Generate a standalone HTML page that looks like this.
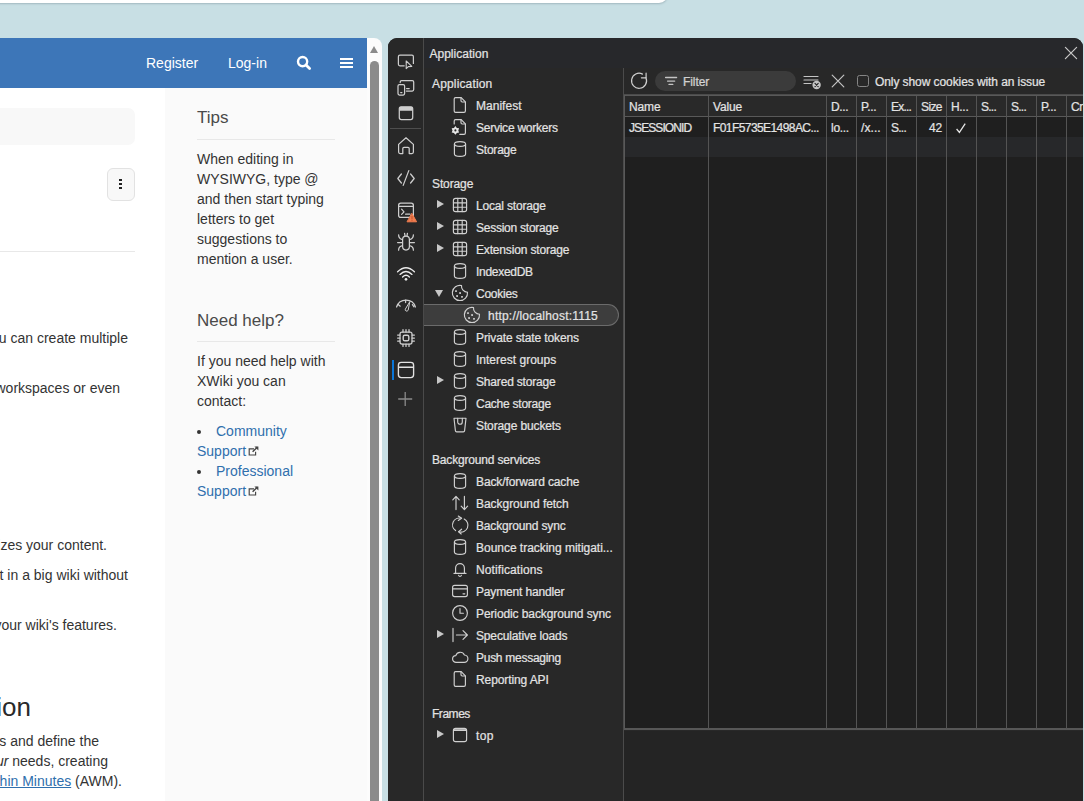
<!DOCTYPE html>
<html>
<head>
<meta charset="utf-8">
<style>
*{box-sizing:border-box;margin:0;padding:0}
html,body{width:1084px;height:801px;overflow:hidden}
body{background:#c8dfe4;font-family:"Liberation Sans",sans-serif;position:relative}
.abs{position:absolute}
/* top strip */
#topbar{left:-20px;top:-20px;width:688px;height:23px;background:#fff;border-radius:0 0 9px 9px;box-shadow:0 1px 2px rgba(90,110,120,.35)}
/* web page */
#page{left:0;top:38px;width:367px;height:763px;background:#fff;overflow:hidden;color:#333;font-size:14px}
#hdr{left:0;top:0;width:367px;height:50px;background:#3d76b8}
#hdr .t{color:#fff;font-size:14px;top:17px;line-height:16px;white-space:nowrap}
#side{left:165px;top:50px;width:202px;height:713px;background:#fafafa}
#sb{left:367px;top:38px;width:15px;height:763px;background:#fcfcfc;border-radius:0 8px 0 0}
#sbthumb{left:370px;top:61px;width:9px;height:745px;background:#8b8b8b;border-radius:5px}
#sbarrow{left:369.8px;top:46.2px;width:0;height:0;border-left:4.8px solid transparent;border-right:4.8px solid transparent;border-bottom:7.2px solid #8b8b8b}
.pt{position:absolute;white-space:nowrap;color:#333;font-size:14px;line-height:20px}
.lnk{color:#2f6fad}
/* devtools */
#dt{-webkit-text-stroke:0.22px #e3e3e3;left:388px;top:38px;width:695px;height:763px;background:#282828;border-radius:9px 9px 0 0;overflow:hidden;color:#e3e3e3;font-size:12px}
#dtbar{left:36px;top:0;width:659px;height:30px;background:#27282b}
#iconcol{left:0;top:0;width:36px;height:763px;background:#282828;border-right:1px solid #4a4a4a}
.tr{position:absolute;left:36px;width:199px;height:22px;line-height:22px;white-space:nowrap;color:#e3e3e3;font-size:12px}
.tr span{position:absolute;left:52px;top:1px}
.tx{white-space:nowrap;line-height:22px;height:22px;padding-top:1px;color:#e3e3e3;font-size:12px}
.tr.sel{left:36px;width:195px;background:#3d3d3d;border:1px solid #6b6b6b;border-left:0;border-radius:0 11px 11px 0}
.tr.sel span{top:0}.tr.sel svg{top:1px}
.tr.h span{left:8px}
.tr svg{position:absolute;left:27px;top:2px;width:18px;height:18px}
.arr{position:absolute;left:12.5px;top:6px;width:0;height:0;border-top:4.5px solid transparent;border-bottom:4.5px solid transparent;border-left:7px solid #c7c7c7}
.arr.d{left:11px;top:8px;border-left:4.5px solid transparent;border-right:4.5px solid transparent;border-top:7px solid #c7c7c7;border-bottom:0}
</style>
</head>
<body>
<div id="topbar" class="abs"></div>

<div id="page" class="abs">
  <div id="side" class="abs"></div>
  <div id="hdr" class="abs">
    <div class="t abs" style="left:146px">Register</div>
    <div class="t abs" style="left:228px">Log-in</div>
    <svg class="abs" style="left:296px;top:17px" width="16" height="16" viewBox="0 0 16 16"><circle cx="6.6" cy="6.6" r="4.6" fill="none" stroke="#fff" stroke-width="2.4"/><path d="M10 10 L13.6 13.6" stroke="#fff" stroke-width="2.8" stroke-linecap="round"/></svg>
    <div class="abs" style="left:340px;top:20px;width:13px;height:2.2px;background:#fff;box-shadow:0 4px 0 #fff,0 8px 0 #fff"></div>
  </div>
  <!-- main column -->
  <div class="abs" style="left:-20px;top:70px;width:155px;height:37px;background:#f8f8f8;border-radius:7px"></div>
  <div class="abs" style="left:106.5px;top:129.5px;width:28.5px;height:33.5px;background:#f8f8f8;border:1px solid #e2e2e2;border-radius:6px"></div>
  <div class="abs" style="left:119px;top:140.6px;width:2.8px;height:2.8px;background:#222;box-shadow:0 4px 0 #222,0 8px 0 #222"></div>
  <div class="abs" style="left:0;top:213px;width:135px;height:1px;background:#e8e8e8"></div>
  <div class="pt" style="right:239px;top:290px">u can create multiple</div>
  <div class="pt" style="right:247px;top:340px">workspaces or even</div>
  <div class="pt" style="right:260px;top:497px">izes your content.</div>
  <div class="pt" style="right:239px;top:527px">t in a big wiki without</div>
  <div class="pt" style="right:250px;top:577px">your wiki's features.</div>
  <div class="pt" style="right:336px;top:652px;font-size:26px;line-height:34px;color:#2a2a2a">ion</div>
  <div class="pt" style="right:268px;top:693px">s and define the</div>
  <div class="pt" style="right:259px;top:713px"><i>ur</i> needs, creating</div>
  <div class="pt" style="right:245px;top:733px"><span class="lnk" style="text-decoration:underline">hin Minutes</span> (AWM).</div>
  <!-- right panels -->
  <div class="pt" style="left:197px;top:68px;font-size:17px;line-height:24px;color:#4a4a4a">Tips</div>
  <div class="abs" style="left:197px;top:101px;width:138px;height:1px;background:#e8e8e8"></div>
  <div class="pt" style="left:197px;top:111px;white-space:normal;width:150px">When editing in<br>WYSIWYG, type @<br>and then start typing<br>letters to get<br>suggestions to<br>mention a user.</div>
  <div class="pt" style="left:197px;top:271px;font-size:17px;line-height:24px;color:#4a4a4a">Need help?</div>
  <div class="abs" style="left:197px;top:303px;width:138px;height:1px;background:#e8e8e8"></div>
  <div class="pt" style="left:197px;top:313px">If you need help with<br>XWiki you can<br>contact:</div>
  <div class="abs" style="left:196.8px;top:391.6px;width:4.6px;height:4.6px;border-radius:3px;background:#333"></div>
  <div class="abs" style="left:196.8px;top:431.6px;width:4.6px;height:4.6px;border-radius:3px;background:#333"></div>
<svg class="abs" style="left:247.5px;top:408px" width="11" height="10" viewBox="0 0 11 10" fill="none" stroke="#444" stroke-width="1.15"><path d="M6 2.8 H1.2 V9 H7.6 V5.8"/><path d="M4.6 5.8 L9.4 1" stroke-width="1.4"/><path d="M6.4 0.4 H10.4 V4.4 Z" fill="#444" stroke="none"/></svg>
<svg class="abs" style="left:247.5px;top:448px" width="11" height="10" viewBox="0 0 11 10" fill="none" stroke="#444" stroke-width="1.15"><path d="M6 2.8 H1.2 V9 H7.6 V5.8"/><path d="M4.6 5.8 L9.4 1" stroke-width="1.4"/><path d="M6.4 0.4 H10.4 V4.4 Z" fill="#444" stroke="none"/></svg>
  <div class="pt lnk" style="left:216px;top:383px">Community</div>
  <div class="pt lnk" style="left:197px;top:403px">Support</div>
  <div class="pt lnk" style="left:216px;top:423px">Professional</div>
  <div class="pt lnk" style="left:197px;top:443px">Support</div>
</div>
<div id="sb" class="abs"></div>
<div id="sbthumb" class="abs"></div>
<div id="sbarrow" class="abs"></div>

<div id="dt" class="abs">
  <div id="dtbar" class="abs"></div>
  <div id="iconcol" class="abs"></div>
<svg class="abs" style="left:0;top:0" width="36" height="420" viewBox="0 0 36 420" fill="none" stroke="#cecece" stroke-width="1.25" stroke-linecap="round" stroke-linejoin="round">
  <!-- inspect -->
  <path d="M16.2 27.8 H11.9 Q10.4 27.8 10.4 26.3 V18.7 Q10.4 17.2 11.9 17.2 H23.9 Q25.4 17.2 25.4 18.7 V25.4"/>
  <path d="M18.2 23 V30.6 L20.3 28.6 L23.8 28.4 Z" stroke-width="1.1"/>
  <!-- device -->
  <path d="M12.2 44.6 V44 Q12.2 42.6 13.6 42.6 H24.3 Q25.7 42.6 25.7 44 V51.6 Q25.7 53 24.3 53 H18.4"/>
  <rect x="10" y="46.6" width="6.6" height="10.4" rx="1.4"/>
  <path d="M18.6 50.6 H21.2 M12.7 54.6 H13.9"/>
  <!-- window filled top -->
  <rect x="11.3" y="68.8" width="13.4" height="12.8" rx="2"/>
  <path d="M11.9 69.4 H24.1 V72 H11.9 Z" fill="#cecece"/>
  <!-- divider -->
  <path d="M2 90.5 H33" stroke="#4e4e4e" stroke-width="1" stroke-linecap="butt"/>
  <!-- home -->
  <path d="M10.6 106.4 L18 99.8 L25.4 106.4 V114 Q25.4 115.5 23.9 115.5 H21.2 V110.6 Q21.2 109.4 20 109.4 H16 Q14.8 109.4 14.8 110.6 V115.5 H12.1 Q10.6 115.5 10.6 114 Z"/>
  <!-- code -->
  <path d="M13.4 136 L9.8 140.5 L13.4 145 M15.2 147.4 L20.8 132.6 M22.6 136 L26.2 140.5 L22.6 145"/>
  <!-- console -->
  <rect x="10.6" y="165" width="14.8" height="14.4" rx="2.2"/>
  <path d="M10.8 168.4 H25.2 M13.6 171.2 L16 173.8 L13.6 176.4 M17.6 176.2 H22"/>
  <path d="M24 175.6 L28.6 183.8 H19.4 Z" fill="#f27d4f" stroke="#f27d4f" stroke-width="1"/>
  <path d="M24 178.4 V181 M24 182.6 V182.7" stroke="#c2532a" stroke-width="1"/>
  <!-- bug -->
  <rect x="14.6" y="198" width="6.8" height="14" rx="3.4"/>
  <path d="M16.6 195.4 L17 197.8 M19.4 195.4 L19 197.8"/>
  <path d="M10.6 196.8 Q10.6 200.8 14.4 201.6 M9.6 204.6 H14.4 M10.6 212.2 Q10.6 208.4 14.4 207.6"/>
  <path d="M25.4 196.8 Q25.4 200.8 21.6 201.6 M26.4 204.6 H21.6 M25.4 212.2 Q25.4 208.4 21.6 207.6"/>
  <!-- wifi -->
  <g stroke="#ececec" stroke-width="1.35">
  <path d="M14.6 239 Q18 235.6 21.4 239 M12 236.4 Q18 230.6 24 236.4 M9.6 233.8 Q18 225.8 26.4 233.8"/>
  <circle cx="18" cy="241.3" r="1.35" fill="#ececec" stroke="none"/>
  </g>
  <!-- gauge -->
  <path d="M8.6 269 A9.9 9.9 0 0 1 27.4 269"/>
  <path d="M10.2 266.6 L12.2 268.2 M17.6 262 V264.6 M24.4 266.6 L26 268.8"/>
  <path d="M21.6 264 L17.3 271.2 A1.5 1.5 0 0 0 19.9 272.6 Z" stroke-width="1"/>
  <!-- cpu -->
  <rect x="12" y="294" width="12" height="12" rx="2"/>
  <rect x="15.2" y="297.2" width="5.6" height="5.6" rx="1.6" stroke-width="1.4"/>
  <path d="M15 291.6 V294 M18 291.6 V294 M21 291.6 V294 M15 306 V308.4 M18 306 V308.4 M21 306 V308.4 M9.6 297 H12 M9.6 300 H12 M9.6 303 H12 M24 297 H26.4 M24 300 H26.4 M24 303 H26.4"/>
  <!-- selected bar + app window -->
  <rect x="4" y="322" width="2" height="20" fill="#0a76d8" stroke="none"/>
  <rect x="10.4" y="324.4" width="15.2" height="15.2" rx="2.8" stroke="#e2e2e2" stroke-width="1.35"/>
  <path d="M10.6 329.2 H25.4" stroke="#e2e2e2" stroke-width="1.35"/>
  <!-- plus -->
  <path d="M10.2 361 H24.2 M17.2 354 V368" stroke="#8a8a8a" stroke-width="1.3" stroke-linecap="butt"/>
</svg>

<div class="tr h" style="top:34px"><span style="letter-spacing:0.153px">Application</span></div>
<div class="tr" style="top:56px"><svg width="18" height="18" viewBox="0 0 18 18" fill="none" stroke="#d0d0d0" stroke-width="1.15" stroke-linecap="round" stroke-linejoin="round" overflow="visible" ><path d="M4.6 1.6 H10.2 L14.4 5.8 V15 Q14.4 16.4 13 16.4 H4.6 Q3.2 16.4 3.2 15 V3 Q3.2 1.6 4.6 1.6 Z"/><path d="M10 1.8 V4.8 Q10 6 11.2 6 H14.2"/></svg><span style="letter-spacing:0.018px">Manifest</span></div>
<div class="tr" style="top:78px"><svg width="18" height="18" viewBox="0 0 18 18" fill="none" stroke="#d0d0d0" stroke-width="1.15" stroke-linecap="round" stroke-linejoin="round" overflow="visible" ><path d="M3.2 6 V3 Q3.2 1.6 4.6 1.6 H10.2 L14.4 5.8 V15 Q14.4 16.4 13 16.4 H8.8"/><path d="M10 1.8 V4.8 Q10 6 11.2 6 H14.2"/><path d="M4.40 8.10 L5.85 9.89 L8.12 10.25 L7.30 12.40 L8.12 14.55 L5.85 14.91 L4.40 16.70 L2.95 14.91 L0.68 14.55 L1.50 12.40 L0.68 10.25 L2.95 9.89 Z" fill="#e6e6e6" stroke="none"/><circle cx="4.4" cy="12.4" r="1.05" fill="#282828" stroke="none"/></svg><span style="letter-spacing:-0.244px">Service workers</span></div>
<div class="tr" style="top:100px"><svg width="18" height="18" viewBox="0 0 18 18" fill="none" stroke="#d0d0d0" stroke-width="1.15" stroke-linecap="round" stroke-linejoin="round" overflow="visible" ><ellipse cx="9" cy="4" rx="5.6" ry="2.4"/><path d="M3.4 4 V14 C3.4 15.4 5.8 16.4 9 16.4 C12.2 16.4 14.6 15.4 14.6 14 V4"/></svg><span style="letter-spacing:-0.219px">Storage</span></div>
<div class="tr h" style="top:134px"><span style="letter-spacing:-0.119px">Storage</span></div>
<div class="tr" style="top:156px"><i class="arr"></i><svg width="18" height="18" viewBox="0 0 18 18" fill="none" stroke="#d0d0d0" stroke-width="1.15" stroke-linecap="round" stroke-linejoin="round" overflow="visible" ><rect x="2.4" y="2.4" width="13.2" height="13.2" rx="2.2"/><path d="M6.8 2.4 V15.6 M11.2 2.4 V15.6 M2.4 6.8 H15.6 M2.4 11.2 H15.6"/></svg><span style="letter-spacing:-0.181px">Local storage</span></div>
<div class="tr" style="top:178px"><i class="arr"></i><svg width="18" height="18" viewBox="0 0 18 18" fill="none" stroke="#d0d0d0" stroke-width="1.15" stroke-linecap="round" stroke-linejoin="round" overflow="visible" ><rect x="2.4" y="2.4" width="13.2" height="13.2" rx="2.2"/><path d="M6.8 2.4 V15.6 M11.2 2.4 V15.6 M2.4 6.8 H15.6 M2.4 11.2 H15.6"/></svg><span style="letter-spacing:-0.244px">Session storage</span></div>
<div class="tr" style="top:200px"><i class="arr"></i><svg width="18" height="18" viewBox="0 0 18 18" fill="none" stroke="#d0d0d0" stroke-width="1.15" stroke-linecap="round" stroke-linejoin="round" overflow="visible" ><rect x="2.4" y="2.4" width="13.2" height="13.2" rx="2.2"/><path d="M6.8 2.4 V15.6 M11.2 2.4 V15.6 M2.4 6.8 H15.6 M2.4 11.2 H15.6"/></svg><span style="letter-spacing:-0.163px">Extension storage</span></div>
<div class="tr" style="top:222px"><svg width="18" height="18" viewBox="0 0 18 18" fill="none" stroke="#d0d0d0" stroke-width="1.15" stroke-linecap="round" stroke-linejoin="round" overflow="visible" ><ellipse cx="9" cy="4" rx="5.6" ry="2.4"/><path d="M3.4 4 V14 C3.4 15.4 5.8 16.4 9 16.4 C12.2 16.4 14.6 15.4 14.6 14 V4"/></svg><span style="letter-spacing:-0.286px">IndexedDB</span></div>
<div class="tr" style="top:244px"><i class="arr d"></i><svg width="18" height="18" viewBox="0 0 18 18" fill="none" stroke="#d0d0d0" stroke-width="1.15" stroke-linecap="round" stroke-linejoin="round" overflow="visible" ><path d="M10.5 1.5 A7.6 7.6 0 1 0 16.5 8.2 A6 6 0 0 1 10.5 1.5 Z"/><g fill="#d0d0d0" stroke="none"><rect x="4.1" y="6.2" width="1.8" height="1.8" rx=".4"/><rect x="8.2" y="8.1" width="1.8" height="1.8" rx=".4"/><rect x="5.2" y="11.1" width="1.8" height="1.8" rx=".4"/><rect x="10.1" y="11.9" width="1.8" height="1.8" rx=".4"/></g></svg><span style="letter-spacing:-0.251px">Cookies</span></div>
<div class="tr sel" style="top:266px"><svg width="18" height="18" viewBox="0 0 18 18" fill="none" stroke="#d0d0d0" stroke-width="1.15" stroke-linecap="round" stroke-linejoin="round" overflow="visible" style="left:39px"><path d="M10.5 1.5 A7.6 7.6 0 1 0 16.5 8.2 A6 6 0 0 1 10.5 1.5 Z"/><g fill="#d0d0d0" stroke="none"><rect x="4.1" y="6.2" width="1.8" height="1.8" rx=".4"/><rect x="8.2" y="8.1" width="1.8" height="1.8" rx=".4"/><rect x="5.2" y="11.1" width="1.8" height="1.8" rx=".4"/><rect x="10.1" y="11.9" width="1.8" height="1.8" rx=".4"/></g></svg><span style="left:64px;letter-spacing:0.208px">http://localhost:1115</span></div>
<div class="tr" style="top:288px"><svg width="18" height="18" viewBox="0 0 18 18" fill="none" stroke="#d0d0d0" stroke-width="1.15" stroke-linecap="round" stroke-linejoin="round" overflow="visible" ><ellipse cx="9" cy="4" rx="5.6" ry="2.4"/><path d="M3.4 4 V14 C3.4 15.4 5.8 16.4 9 16.4 C12.2 16.4 14.6 15.4 14.6 14 V4"/></svg><span style="letter-spacing:-0.120px">Private state tokens</span></div>
<div class="tr" style="top:310px"><svg width="18" height="18" viewBox="0 0 18 18" fill="none" stroke="#d0d0d0" stroke-width="1.15" stroke-linecap="round" stroke-linejoin="round" overflow="visible" ><ellipse cx="9" cy="4" rx="5.6" ry="2.4"/><path d="M3.4 4 V14 C3.4 15.4 5.8 16.4 9 16.4 C12.2 16.4 14.6 15.4 14.6 14 V4"/></svg><span style="letter-spacing:0.010px">Interest groups</span></div>
<div class="tr" style="top:332px"><i class="arr"></i><svg width="18" height="18" viewBox="0 0 18 18" fill="none" stroke="#d0d0d0" stroke-width="1.15" stroke-linecap="round" stroke-linejoin="round" overflow="visible" ><ellipse cx="9" cy="4" rx="5.6" ry="2.4"/><path d="M3.4 4 V14 C3.4 15.4 5.8 16.4 9 16.4 C12.2 16.4 14.6 15.4 14.6 14 V4"/></svg><span style="letter-spacing:-0.176px">Shared storage</span></div>
<div class="tr" style="top:354px"><svg width="18" height="18" viewBox="0 0 18 18" fill="none" stroke="#d0d0d0" stroke-width="1.15" stroke-linecap="round" stroke-linejoin="round" overflow="visible" ><ellipse cx="9" cy="4" rx="5.6" ry="2.4"/><path d="M3.4 4 V14 C3.4 15.4 5.8 16.4 9 16.4 C12.2 16.4 14.6 15.4 14.6 14 V4"/></svg><span style="letter-spacing:-0.242px">Cache storage</span></div>
<div class="tr" style="top:376px"><svg width="18" height="18" viewBox="0 0 18 18" fill="none" stroke="#d0d0d0" stroke-width="1.15" stroke-linecap="round" stroke-linejoin="round" overflow="visible" ><path d="M3 2.2 H15 L13.6 14.6 Q13.5 15.8 12.3 15.8 H5.7 Q4.5 15.8 4.4 14.6 Z"/><path d="M6.7 2.4 V5.9 A2.3 2.3 0 0 0 11.3 5.9 V2.4"/></svg><span style="letter-spacing:-0.121px">Storage buckets</span></div>
<div class="tr h" style="top:410px"><span style="letter-spacing:-0.168px">Background services</span></div>
<div class="tr" style="top:432px"><svg width="18" height="18" viewBox="0 0 18 18" fill="none" stroke="#d0d0d0" stroke-width="1.15" stroke-linecap="round" stroke-linejoin="round" overflow="visible" ><ellipse cx="9" cy="4" rx="5.6" ry="2.4"/><path d="M3.4 4 V14 C3.4 15.4 5.8 16.4 9 16.4 C12.2 16.4 14.6 15.4 14.6 14 V4"/></svg><span style="letter-spacing:-0.111px">Back/forward cache</span></div>
<div class="tr" style="top:454px"><svg width="18" height="18" viewBox="0 0 18 18" fill="none" stroke="#d0d0d0" stroke-width="1.15" stroke-linecap="round" stroke-linejoin="round" overflow="visible" ><path d="M5 15.6 V2.6 M1.8 5.8 L5 2.4 L8.2 5.8"/><path d="M13.4 2.4 V15.4 M10.2 12.2 L13.4 15.6 L16.6 12.2"/></svg><span style="letter-spacing:-0.044px">Background fetch</span></div>
<div class="tr" style="top:476px"><svg width="18" height="18" viewBox="0 0 18 18" fill="none" stroke="#d0d0d0" stroke-width="1.15" stroke-linecap="round" stroke-linejoin="round" overflow="visible" ><path d="M4.6 14.6 A6.85 6.85 0 0 1 10.2 2.3"/><path d="M7.3 0 L10.6 2.3 L7.3 4.4"/><path d="M13.2 3.1 A6.85 6.85 0 0 1 7.9 15.7"/><path d="M10.6 13.2 L7.6 15.7 L10.2 18"/></svg><span style="letter-spacing:-0.171px">Background sync</span></div>
<div class="tr" style="top:498px"><svg width="18" height="18" viewBox="0 0 18 18" fill="none" stroke="#d0d0d0" stroke-width="1.15" stroke-linecap="round" stroke-linejoin="round" overflow="visible" ><ellipse cx="9" cy="4" rx="5.6" ry="2.4"/><path d="M3.4 4 V14 C3.4 15.4 5.8 16.4 9 16.4 C12.2 16.4 14.6 15.4 14.6 14 V4"/></svg><span style="letter-spacing:-0.026px">Bounce tracking mitigati...</span></div>
<div class="tr" style="top:520px"><svg width="18" height="18" viewBox="0 0 18 18" fill="none" stroke="#d0d0d0" stroke-width="1.15" stroke-linecap="round" stroke-linejoin="round" overflow="visible" ><path d="M3 13.4 H15 M4.6 13.2 V8 A4.4 4.4 0 0 1 13.4 8 V13.2"/><path d="M7.6 15.4 A1.5 1.5 0 0 0 10.4 15.4"/></svg><span style="letter-spacing:0.102px">Notifications</span></div>
<div class="tr" style="top:542px"><svg width="18" height="18" viewBox="0 0 18 18" fill="none" stroke="#d0d0d0" stroke-width="1.15" stroke-linecap="round" stroke-linejoin="round" overflow="visible" ><rect x="1.6" y="3.4" width="14.8" height="11.2" rx="2"/><path d="M1.6 6.8 H16.4 M12 11.8 H13.8"/></svg><span style="letter-spacing:-0.156px">Payment handler</span></div>
<div class="tr" style="top:564px"><svg width="18" height="18" viewBox="0 0 18 18" fill="none" stroke="#d0d0d0" stroke-width="1.15" stroke-linecap="round" stroke-linejoin="round" overflow="visible" ><circle cx="9" cy="9" r="7.4"/><path d="M9 4.6 V9.2 H12.4"/></svg><span style="letter-spacing:-0.105px">Periodic background sync</span></div>
<div class="tr" style="top:586px"><i class="arr"></i><svg width="18" height="18" viewBox="0 0 18 18" fill="none" stroke="#d0d0d0" stroke-width="1.15" stroke-linecap="round" stroke-linejoin="round" overflow="visible" ><path d="M2 2.4 V15.6 M5.4 9 H16 M12 4.6 L16.4 9 L12 13.4"/></svg><span style="letter-spacing:-0.157px">Speculative loads</span></div>
<div class="tr" style="top:608px"><svg width="18" height="18" viewBox="0 0 18 18" fill="none" stroke="#d0d0d0" stroke-width="1.15" stroke-linecap="round" stroke-linejoin="round" overflow="visible" ><path d="M5.2 14.4 A3.4 3.4 0 0 1 4.8 7.6 A4.6 4.6 0 0 1 13.4 7 A3.7 3.7 0 0 1 13 14.4 Z"/></svg><span style="letter-spacing:-0.273px">Push messaging</span></div>
<div class="tr" style="top:630px"><svg width="18" height="18" viewBox="0 0 18 18" fill="none" stroke="#d0d0d0" stroke-width="1.15" stroke-linecap="round" stroke-linejoin="round" overflow="visible" ><path d="M4.6 1.6 H10.2 L14.4 5.8 V15 Q14.4 16.4 13 16.4 H4.6 Q3.2 16.4 3.2 15 V3 Q3.2 1.6 4.6 1.6 Z"/><path d="M10 1.8 V4.8 Q10 6 11.2 6 H14.2"/></svg><span style="letter-spacing:-0.104px">Reporting API</span></div>
<div class="tr h" style="top:664px"><span style="letter-spacing:-0.462px">Frames</span></div>
<div class="tr" style="top:686px"><i class="arr"></i><svg width="18" height="18" viewBox="0 0 18 18" fill="none" stroke="#d0d0d0" stroke-width="1.15" stroke-linecap="round" stroke-linejoin="round" overflow="visible" ><rect x="2.4" y="2.4" width="13.2" height="13.2" rx="2.2"/><path d="M2.6 3.8 H15.4 V4.4 H2.6 Z" fill="#d0d0d0"/></svg><span style="letter-spacing:0.371px">top</span></div>
<div class="abs tx" style="left:41.4px;top:4px;letter-spacing:0.035px">Application</div>
<svg class="abs" style="left:676px;top:8px" width="14" height="14" viewBox="0 0 14 14" stroke="#c7c7c7" stroke-width="1.2" stroke-linecap="round"><path d="M1.4 1.4 L12.6 12.6 M12.6 1.4 L1.4 12.6"/></svg>
<div class="abs" style="left:235px;top:30px;width:1px;height:733px;background:#4b4b4b"></div>
<div class="abs" style="left:236px;top:30px;width:460px;height:26px;background:#282828"></div>
<svg class="abs" style="left:241px;top:33px" width="20" height="20" viewBox="0 0 20 20" fill="none" stroke="#cecece" stroke-width="1.2" stroke-linecap="round" stroke-linejoin="round"><path d="M17 6.9 A7.5 7.5 0 1 1 13.5 3.1"/><path d="M17.1 2.2 V6.8 H12.4"/></svg>
<div class="abs" style="left:267px;top:33px;width:141px;height:20px;border-radius:10px;background:#3b3b3b"></div>
<svg class="abs" style="left:276px;top:38px" width="14" height="10" viewBox="0 0 14 10" stroke="#c4c4c4" stroke-width="1.3" stroke-linecap="round"><path d="M1.6 1.5 H12.6 M3.5 5.1 H10.7 M5 8.4 H8.8"/></svg>
<div class="abs tx" style="left:295px;top:32px;color:#c9c9c9;letter-spacing:-0.079px">Filter</div>
<svg class="abs" style="left:415px;top:36px" width="20" height="16" viewBox="0 0 20 16" fill="none" stroke="#c4c4c4" stroke-width="1.2" stroke-linecap="round"><path d="M1 2.5 H15 M1 6 H15 M1 9.5 H8"/><circle cx="13.6" cy="11" r="4.2" fill="#c4c4c4" stroke="none"/><path d="M12 9.4 L15.2 12.6 M15.2 9.4 L12 12.6" stroke="#282828" stroke-width="1.2"/></svg>
<svg class="abs" style="left:443px;top:36px" width="14" height="14" viewBox="0 0 14 14" stroke="#c4c4c4" stroke-width="1.2" stroke-linecap="round"><path d="M1.2 1.2 L12.8 12.8 M12.8 1.2 L1.2 12.8"/></svg>
<div class="abs" style="left:469px;top:37px;width:12px;height:12px;border:1px solid #858585;border-radius:2.5px"></div>
<div class="abs tx" style="left:487px;top:32px;letter-spacing:-0.082px">Only show cookies with an issue</div>
<div class="abs" style="left:236px;top:56px;width:460px;height:1px;background:#4b4b4b"></div>
<div class="abs" style="left:236px;top:57px;width:460px;height:635px;background:#1f1f1f;border-left:1px solid #595959;border-top:1px solid #595959;border-bottom:2px solid #575757"></div>
<div class="abs" style="left:237px;top:58px;width:459px;height:20px;background:#292929"></div>
<div class="abs" style="left:237px;top:78px;width:459px;height:1px;background:#595959"></div>
<div class="abs" style="left:237px;top:99px;width:459px;height:20px;background:#27282a"></div>
<div class="abs" style="left:236px;top:693px;width:460px;height:80px;background:#242424"></div>
<div class="abs" style="left:320px;top:58px;width:1px;height:633px;background:#545454"></div>
<div class="abs" style="left:438px;top:58px;width:1px;height:633px;background:#545454"></div>
<div class="abs" style="left:468px;top:58px;width:1px;height:633px;background:#545454"></div>
<div class="abs" style="left:498px;top:58px;width:1px;height:633px;background:#545454"></div>
<div class="abs" style="left:528px;top:58px;width:1px;height:633px;background:#545454"></div>
<div class="abs" style="left:558px;top:58px;width:1px;height:633px;background:#545454"></div>
<div class="abs" style="left:588px;top:58px;width:1px;height:633px;background:#545454"></div>
<div class="abs" style="left:618px;top:58px;width:1px;height:633px;background:#545454"></div>
<div class="abs" style="left:648px;top:58px;width:1px;height:633px;background:#545454"></div>
<div class="abs" style="left:678px;top:58px;width:1px;height:633px;background:#545454"></div>
<div class="abs tx" style="left:241px;top:57px;letter-spacing:-0.129px">Name</div>
<div class="abs tx" style="left:325px;top:57px;letter-spacing:-0.163px">Value</div>
<div class="abs tx" style="left:443px;top:57px;letter-spacing:-0.393px">D...</div>
<div class="abs tx" style="left:473px;top:57px;letter-spacing:-0.317px">P...</div>
<div class="abs tx" style="left:503px;top:57px;letter-spacing:-0.803px">Ex...</div>
<div class="abs tx" style="left:533px;top:57px;letter-spacing:-0.611px">Size</div>
<div class="abs tx" style="left:563px;top:57px;letter-spacing:-0.318px">H...</div>
<div class="abs tx" style="left:593px;top:57px;letter-spacing:-0.754px">S...</div>
<div class="abs tx" style="left:623px;top:57px;letter-spacing:-0.754px">S...</div>
<div class="abs tx" style="left:653px;top:57px;letter-spacing:-0.317px">P...</div>
<div class="abs tx" style="left:683px;top:57px;letter-spacing:-0.336px">Cr</div>
<div class="abs tx" style="left:241px;top:78px;letter-spacing:-0.916px">JSESSIONID</div>
<div class="abs tx" style="left:325px;top:78px;letter-spacing:-0.577px">F01F5735E1498AC...</div>
<div class="abs tx" style="left:443px;top:78px;letter-spacing:-0.289px">lo...</div>
<div class="abs tx" style="left:473px;top:78px;letter-spacing:0.091px">/x...</div>
<div class="abs tx" style="left:503px;top:78px;letter-spacing:-0.754px">S...</div>
<div class="abs tx" style="left:534px;top:78px;width:20px;text-align:right;letter-spacing:-0.180px">42</div>
<svg class="abs" style="left:567px;top:84px" width="12" height="12" viewBox="0 0 12 12" fill="none" stroke="#e3e3e3" stroke-width="1.3"><path d="M1.6 7 L4.4 10.4 L10.2 1.6"/></svg>
</div>
</body>
</html>
